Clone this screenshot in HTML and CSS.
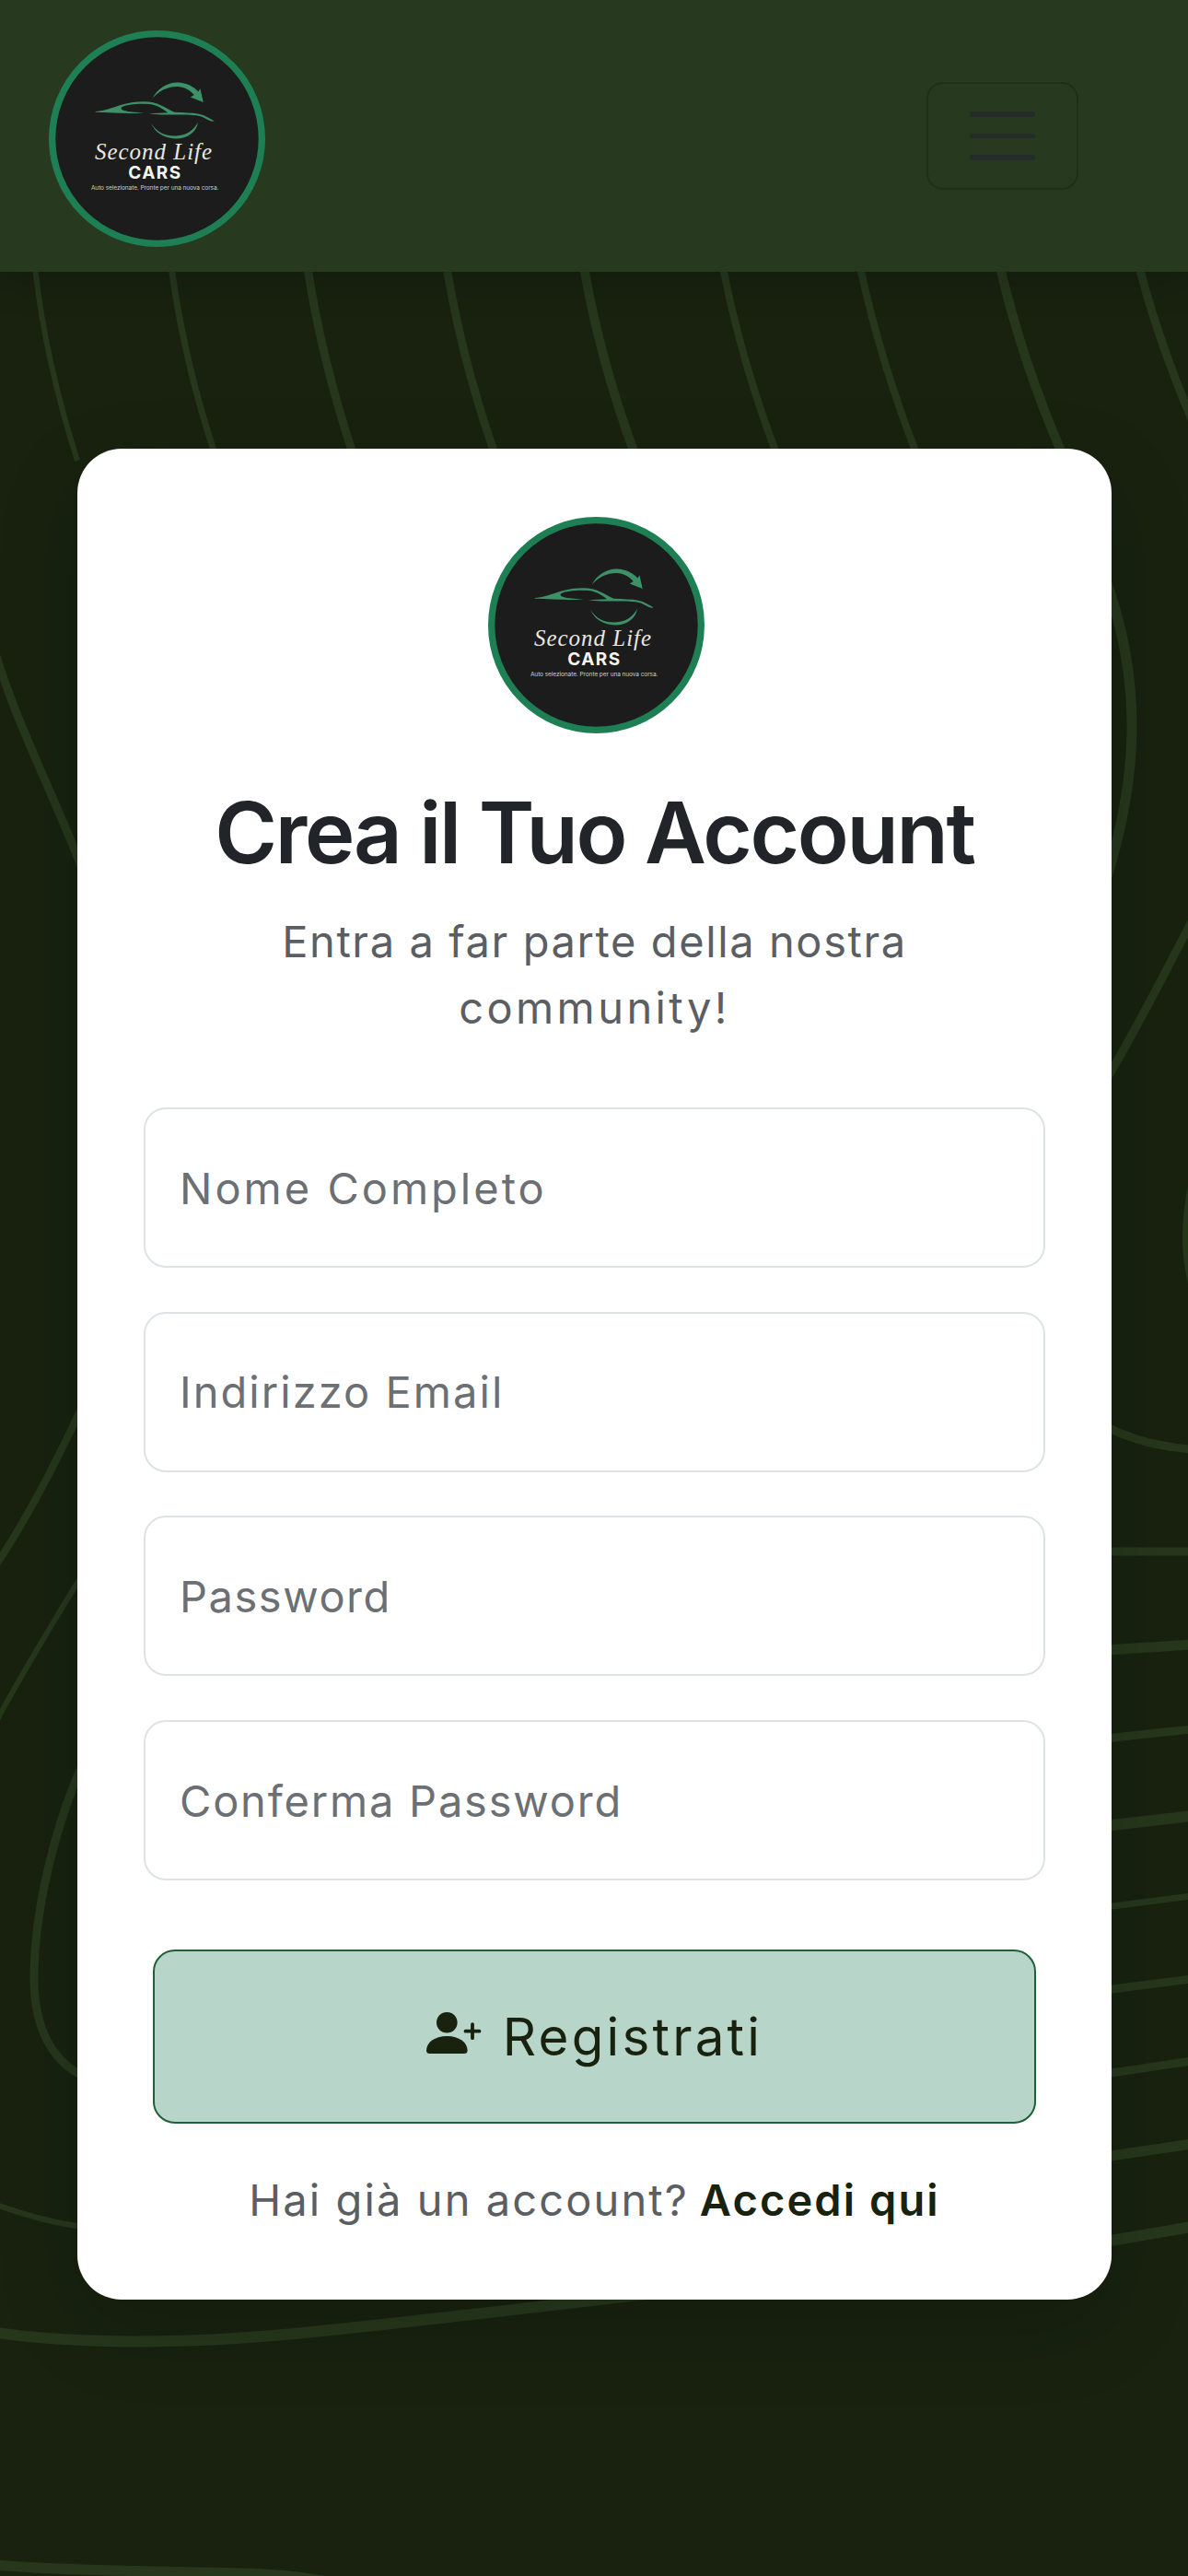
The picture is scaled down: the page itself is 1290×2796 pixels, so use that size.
FILE: index.html
```html
<!DOCTYPE html>
<html lang="it">
<head>
<meta charset="utf-8">
<title>Second Life Cars - Registrazione</title>
<link rel="stylesheet" href="styles.css">
</head>
<body>
<svg class="waves" viewBox="0 0 1290 2796" aria-hidden="true">
  <g class="waves-top">
    <path d="M38 290Q49 390 84 500" stroke-width="6"/>
    <path d="M186 290Q200 392 233 492" stroke-width="7"/>
    <path d="M334 290Q348 385 383 492" stroke-width="9"/>
    <path d="M485 290Q502 392 537 492" stroke-width="9"/>
    <path d="M634 290Q652 392 689 492" stroke-width="10"/>
    <path d="M785 290Q805 392 843 492" stroke-width="8"/>
    <path d="M934 290Q956 392 995 492" stroke-width="8"/>
    <path d="M1086 290Q1110 392 1153 492" stroke-width="10"/>
    <path d="M1237 290Q1258 370 1294 455" stroke-width="9"/>
  </g>
  <g class="waves-left">
    <path d="M-4 712C20 790 55 855 90 945" stroke-width="9"/>
    <path d="M-4 1698C25 1655 55 1600 90 1525" stroke-width="8"/>
    <path d="M-4 1868C25 1815 55 1765 90 1708" stroke-width="6"/>
    <path d="M92 1910C62 1975 37 2070 37 2148C37 2205 60 2240 92 2254" stroke-width="9"/>
    <path d="M-4 2393Q45 2411 90 2417" stroke-width="6"/>
    <path d="M-4 2532C90 2545 210 2544 330 2532C470 2518 590 2503 760 2483C930 2460 1080 2445 1212 2431L1294 2417" stroke-width="12"/>
    <path d="M-4 2784C70 2791 190 2791 270 2793Q310 2794 350 2801" stroke-width="11"/>
  </g>
  <g class="waves-right">
    <path d="M1200 628Q1230 710 1229 794Q1228 870 1200 958" stroke-width="11"/>
    <path d="M1200 1174C1230 1124 1260 1066 1294 1000" stroke-width="9"/>
    <path d="M1295 1285Q1282 1345 1295 1395" stroke-width="9"/>
    <path d="M1200 1548Q1240 1569 1294 1573" stroke-width="9"/>
    <path d="M1200 1684H1294" stroke-width="9"/>
    <path d="M1200 1791L1294 1785" stroke-width="11"/>
    <path d="M1200 1887L1294 1877" stroke-width="9"/>
    <path d="M1200 1982L1294 1971" stroke-width="12"/>
    <path d="M1200 2070L1294 2058" stroke-width="7"/>
    <path d="M1200 2160L1294 2148" stroke-width="9"/>
    <path d="M1200 2251L1294 2237" stroke-width="9"/>
    <path d="M1200 2341L1294 2327" stroke-width="11"/>
  </g>
</svg>

<svg class="defs" width="0" height="0" aria-hidden="true">
  <symbol id="logo" viewBox="39 39 706 706">
    <circle cx="392" cy="392" r="342" fill="#1c1c1c" stroke="#1f7f54" stroke-width="22"/>
    <g fill="#3d9167">
      <path d="M377 261C394 228 426 208 460 209C488 210 511 222 527 239L533 229L543 273L501 257L513 249C498 232 480 223 458 222C427 222 397 236 377 261Z"/>
      <path d="M373 341C390 372 420 384 453 383C488 382 512 365 526 338C521 371 492 392 453 392C414 391 383 371 373 341Z"/>
      <path fill-rule="evenodd" d="M191 303C240 301 275 272 345 271C393 270 417 290 449 306C479 308 505 307 529 312C552 317 567 329 579 335L571 336C552 328 541 319 520 316C472 312 420 317 365 311C389 308 410 309 427 307C404 292 387 278 352 279C323 278 290 282 276 290C271 299 285 305 350 308C294 312 248 307 191 306Z"/>
    </g>
    <text class="logo-script" x="189" y="461" textLength="382">Second Life</text>
    <text class="logo-cars" x="298" y="523" textLength="171">CARS</text>
    <text class="logo-tag" x="177" y="560" textLength="416">Auto selezionate. Pronte per una nuova corsa.</text>
  </symbol>
</svg>

<header class="navbar">
  <a class="brand" href="#"><svg class="logo" role="img" aria-label="Second Life Cars"><use href="#logo"/></svg></a>
  <button class="toggler" type="button" aria-label="Menu"><span class="bar"></span><span class="bar"></span><span class="bar"></span></button>
</header>

<main class="page">
  <section class="card">
    <svg class="logo card-logo" role="img" aria-label="Second Life Cars"><use href="#logo"/></svg>
    <h1 class="title">Crea il Tuo Account</h1>
    <p class="lead">Entra a far parte della nostra<br><span class="lead-end">community!</span></p>
    <form class="form">
      <input class="field field-name" type="text" placeholder="Nome Completo">
      <input class="field field-email" type="email" placeholder="Indirizzo Email">
      <input class="field field-password" type="password" placeholder="Password">
      <input class="field field-confirm" type="password" placeholder="Conferma Password">
      <button class="submit" type="button">
        <svg class="submit-icon" viewBox="0 0 60 46" aria-hidden="true"><circle cx="22.300" cy="11.300" r="11.300"/><path d="M0 41.500C0 33 9 26 22.300 26S44.600 33 44.600 41.500Q44.600 45 41 45H3.500Q0 45 0 41.500Z"/><path d="M50 13.200V28.200M42.500 20.700H57.500" fill="none" stroke="#18220f" stroke-width="3.800" stroke-linecap="round"/></svg>
        <span>Registrati</span>
      </button>
    </form>
    <p class="signin"><span class="ask">Hai già un account?</span><a class="signin-link" href="#">Accedi qui</a></p>
  </section>
</main>
</body>
</html>
```
FILE: styles.css
```css
* { box-sizing: border-box; }
body {
  margin: 0;
  min-height: 2796px;
  background: #18220f;
  color: #212529;
  font-family: Inter, "Liberation Sans", sans-serif;
  overflow: hidden;
}
.defs { position: absolute; }
.waves {
  position: absolute;
  top: 0;
  left: 0;
  width: 1290px;
  height: 2796px;
  fill: none;
  stroke: #26371c;
}
.navbar {
  position: relative;
  display: flex;
  align-items: flex-start;
  justify-content: space-between;
  height: 295px;
  padding: 33px 119px 0 53px;
  background: #27391e;
  box-shadow: 0 12px 36px rgba(0, 0, 0, .15);
}
.brand { display: block; height: 235px; }
.logo { display: block; width: 235px; height: 235px; }
.logo-script { font: italic 75px "Liberation Serif", serif; fill: #e9e7e0; }
.logo-cars { font: 700 57px Inter, sans-serif; fill: #f5f4ee; }
.logo-tag { font: 19.5px Inter, sans-serif; fill: #cfcfcc; }
.toggler {
  display: flex;
  flex-direction: column;
  justify-content: center;
  align-items: center;
  gap: 18px;
  width: 165px;
  height: 117px;
  margin-top: 56px;
  padding: 0;
  background: none;
  border: 2px solid #203018;
  border-radius: 18px;
}
.bar { width: 71px; height: 5.700px; border-radius: 3px; background: #242b29; }
.page { padding: 192px 83px 0 84px; }
.card {
  position: relative;
  display: flex;
  flex-direction: column;
  align-items: center;
  height: 2009px;
  padding-top: 74px;
  background: #fff;
  border-radius: 48px;
  box-shadow: 0 30px 90px rgba(0, 0, 0, .15);
}
.card-logo { margin-left: 4px; }
.title {
  margin: 53px 0 0;
  font-size: 92px;
  line-height: 110px;
  font-weight: 600;
  letter-spacing: -2.300px;
  white-space: nowrap;
}
.lead {
  margin: 27px 0 0;
  font-size: 47px;
  line-height: 72px;
  letter-spacing: 1.600px;
  text-align: center;
  color: #5b5e62;
}
.lead-end { letter-spacing: 3.400px; }
.form {
  display: flex;
  flex-direction: column;
  gap: 47.700px;
  width: 979px;
  margin-top: 72px;
}
.field {
  height: 174px;
  padding: 0 37px;
  border: 2px solid #dee2e6;
  border-radius: 24px;
  background: #fff;
  font: 400 47px Inter, sans-serif;
}
.field::placeholder { color: #6c7074; opacity: 1; }
.field-name { letter-spacing: 3px; }
.field-email { letter-spacing: 2.050px; }
.field-password { letter-spacing: 1.550px; }
.field-confirm { letter-spacing: 1.800px; }
.submit {
  display: flex;
  align-items: center;
  justify-content: center;
  gap: 23px;
  width: 959px;
  height: 189px;
  margin: 27px 10px 0;
  padding: 0;
  border: 2px solid #1f6038;
  border-radius: 24px;
  background: #b8d5c9;
  color: #18220f;
  font: 400 56.500px Inter, sans-serif;
  letter-spacing: 3.200px;
}
.submit-icon { width: 60px; height: 46px; fill: #18220f; margin-top: -6px; }
.signin {
  display: flex;
  gap: 12px;
  margin: 52px 0 0;
  font-size: 47px;
  line-height: 62px;
  letter-spacing: 2.100px;
  color: #5b5e62;
}
.signin-link { color: #18220f; font-weight: 600; letter-spacing: 2.100px; text-decoration: none; }
```
